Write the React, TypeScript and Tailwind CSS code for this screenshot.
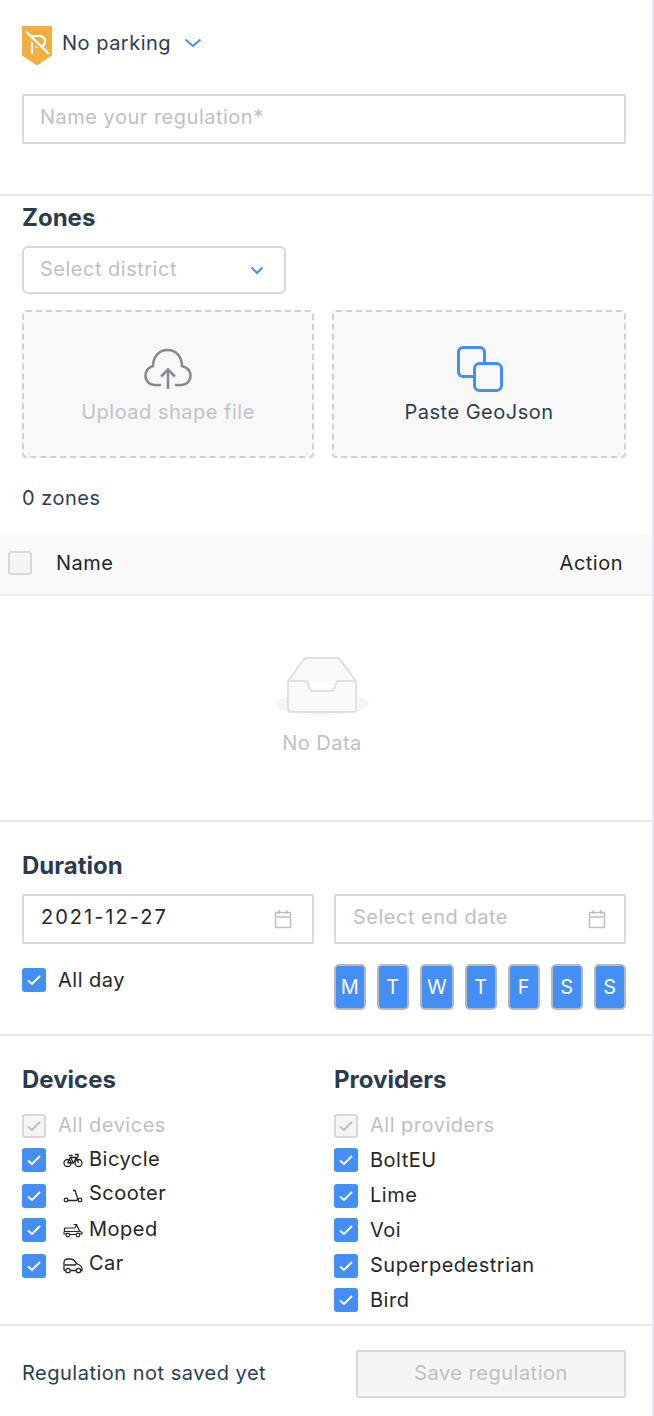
import React from "react";

const Check = ({ disabled = false }: { disabled?: boolean }) => (
  <span
    className={
      disabled
        ? "flex h-6 w-6 shrink-0 items-center justify-center rounded-[3px] border-2 border-[#d9d9d9] bg-[#f5f5f5]"
        : "flex h-6 w-6 shrink-0 items-center justify-center rounded-[3px] bg-[#448ef7]"
    }
  >
    <svg width="16" height="14" viewBox="0 0 16 14" fill="none">
      <path d="M2 7.500 6 11 14 3" stroke={disabled ? "#bfbfbf" : "#fff"} strokeWidth="2" />
    </svg>
  </span>
);

const Bike = () => (
  <svg width="20" height="15" viewBox="0 0 20 15" fill="none" stroke="#262626" strokeWidth="1.300">
    <circle cx="4.500" cy="10" r="3.500" />
    <circle cx="15.500" cy="10" r="3.500" />
    <path d="M4.500 10 7.500 4.500h6l2 5.500M7.500 4.500l3 5.500h-6M10.500 10l3-5.500M6 2.500h3.500M12 1.500h3v2.500L13.500 4.500" />
  </svg>
);
const ScooterIcon = () => (
  <svg width="20" height="15" viewBox="0 0 20 15" fill="none" stroke="#262626" strokeWidth="1.300">
    <circle cx="3" cy="11" r="1.800" />
    <circle cx="17" cy="11" r="1.800" />
    <path d="M5 11.500h9c1-1.500.5-2.500 0-4L12 1.500H10" />
  </svg>
);
const MopedIcon = () => (
  <svg width="20" height="15" viewBox="0 0 20 15" fill="none" stroke="#262626" strokeWidth="1.200">
    <path d="M1.500 5h9.500c.8 0 1.200-.5 1.500-1.200L13.500 1.500h-3M13.500 1.500l3 6.500 2.500 1.500v1.500h-3" />
    <path d="M1.500 5v3.500h13.500l1.500-.5M1 8.500v2.500h2M6.500 11.500h7" />
    <circle cx="4.800" cy="12" r="1.800" />
    <circle cx="15" cy="12" r="1.800" />
  </svg>
);
const CarIcon = () => (
  <svg width="20" height="16" viewBox="0 0 20 16" fill="none" stroke="#262626" strokeWidth="1.300">
    <path d="M2.500 12.500H1.500C1 12.500 1 12 1 11.500V4.500C1 2.500 2.500 1 4.500 1h2.500c3 0 5 1.500 6.500 4.500l3 1.500c1.500.8 2.500 1.800 2.500 3.500v2h-1.500" />
    <path d="M1.500 7h10.500l1.500-1.500M7.500 12.500h5.500" />
    <circle cx="5" cy="12.500" r="2.200" />
    <circle cx="15.500" cy="12.500" r="2.200" />
  </svg>
);

const CalendarIcon = () => (
  <svg width="18" height="20" viewBox="0 0 18 20" fill="none" stroke="#bfbfbf" strokeWidth="1.500">
    <rect x="1.500" y="3.500" width="15" height="15" />
    <path d="M1.500 8h15M5 1v4M13 1v4" />
  </svg>
);

const Row = ({
  label,
  disabled,
  icon,
  rowClass = "",
  labelClass = "",
}: {
  label: string;
  disabled?: boolean;
  icon?: React.ReactNode;
  rowClass?: string;
  labelClass?: string;
}) => (
  <div className={`flex h-6 items-center ${rowClass}`}>
    <Check disabled={disabled} />
    {icon ? (
      <span className="ml-[17px] flex w-[26px] shrink-0 items-center">{icon}</span>
    ) : (
      <span className="w-3 shrink-0" />
    )}
    <span className={`${disabled ? "text-[#bfbfbf]" : "text-[#262626]"} ${labelClass}`}>{label}</span>
  </div>
);

const days = [
  { d: "M", w: "w-8" },
  { d: "T", w: "w-8" },
  { d: "W", w: "w-[34px]" },
  { d: "T", w: "w-8" },
  { d: "F", w: "w-8" },
  { d: "S", w: "w-8" },
  { d: "S", w: "w-8" },
];

export default function App() {
  return (
    <div className="flex h-[1416px] w-[654px] overflow-hidden bg-white font-['Inter',sans-serif] text-[20px] leading-6 tracking-[0.025em]">
      <div className="flex w-[652px] shrink-0 flex-col">
        <div className="h-[196px] shrink-0 border-b-2 border-[#e8e8e8] pt-[26px] pr-[26px] pl-[22px]">
          <div className="flex h-[40px] items-start">
            <svg width="30" height="40" viewBox="0 0 30 40" className="shrink-0">
              <path d="M0 0h30v29.500L16 38.800a2 2 0 0 1-2 0L0 29.500z" fill="#f2ae40" />
              <path d="M10 28V10h7a5.500 5.500 0 0 1 1 11l-5-.5" fill="none" stroke="#fff" strokeWidth="2.200" />
              <path d="M6 9 25 28" stroke="#f2ae40" strokeWidth="4" />
              <path d="M4.500 6 27 28" stroke="#fff" strokeWidth="2.200" />
            </svg>
            <span className="mt-[5px] ml-[10px] text-[#2c3e50]">No parking</span>
            <svg width="18" height="10" viewBox="0 0 18 10" fill="none" className="mt-[12px] ml-[13px]">
              <path d="M1.500 1.500 9 8l7.500-6.500" stroke="#448ef7" strokeWidth="2" />
            </svg>
          </div>
          <div className="mt-[28px] flex h-[50px] items-center rounded-[2px] border-2 border-[#d9d9d9] px-4 pb-1 text-[#bfbfbf]">
            Name your regulation*
          </div>
        </div>

        <div className="pr-[26px] pl-[22px]">
          <h2 className="mt-2 text-[24px] leading-7 font-bold tracking-normal text-[#2a3b50]">Zones</h2>
          <div className="mt-[14px] flex h-12 w-[264px] items-center justify-between rounded-md border-2 border-[#d9d9d9] pr-5 pb-[3px] pl-4 text-[#bfbfbf]">
            Select district
            <svg width="14" height="9" viewBox="0 0 14 9" fill="none" className="mt-1">
              <path d="M1.500 1.500 7 7l5.500-5.500" stroke="#448ef7" strokeWidth="2" />
            </svg>
          </div>
          <div className="mt-4 flex justify-between">
            <div className="flex h-[148px] w-[292px] flex-col items-center rounded-[4px] border-2 border-dashed border-[#d0d0d0] bg-[#f8f8f8] pt-[36px]">
              <svg width="48" height="42" viewBox="0 0 48 42" fill="none" stroke="#85898f" strokeWidth="2.500">
                <path d="M17 37H11C5.500 37 1.500 33 1.500 27.500 1.500 23 4.500 19.500 9 18 9 9 15 2 23.500 2 32 2 38 9 38 18 43 19.500 46.500 23 46.500 27.500 46.500 33 42.500 37 37 37H31" />
                <path d="M24 41V22M17 28.500 24 21.500 31 28.500" />
              </svg>
              <span className="mt-[10px] text-[#bfc3c8]">Upload shape file</span>
            </div>
            <div className="flex h-[148px] w-[294px] flex-col items-center rounded-[4px] border-2 border-dashed border-[#d0d0d0] bg-[#f8f8f8] pt-[34px]">
              <svg width="46" height="46" viewBox="0 0 46 46" fill="none" stroke="#448ef7" strokeWidth="3" className="ml-[2px]">
                <path d="M17 30.500H6a4.500 4.500 0 0 1-4.500-4.500V6A4.500 4.500 0 0 1 6 1.500h17A4.500 4.500 0 0 1 27.500 6v11" />
                <rect x="17.500" y="17.500" width="27" height="27" rx="5" />
              </svg>
              <span className="mt-2 text-[#2c3e50]">Paste GeoJson</span>
            </div>
          </div>
          <p className="mt-[28px] text-[#2c3e50]">0 zones</p>
        </div>

        <div className="mt-[24px] flex h-[62px] shrink-0 items-center justify-between border-b-2 border-[#eeeeee] bg-[#fafafa] pr-[29px] pb-[2px] pl-2">
          <div className="flex items-center">
            <span className="h-6 w-6 rounded-[3px] border-2 border-[#d9d9d9] bg-[#f5f5f5]" />
            <span className="ml-6 text-[#262626]">Name</span>
          </div>
          <span className="text-[#262626]">Action</span>
        </div>

        <div className="flex h-[226px] shrink-0 flex-col items-center border-b-2 border-[#e8e8e8] pt-[60px] pr-[8px]">
          <svg width="96" height="62" viewBox="0 0 96 62">
            <ellipse cx="48" cy="48" rx="47" ry="11" fill="#f5f5f5" />
            <path d="M14 25 31 2h34l17 23v28a3 3 0 0 1-3 3H17a3 3 0 0 1-3-3z" fill="#fafafa" stroke="#d9d9d9" strokeWidth="1.500" />
            <path d="M14 25h17c3 0 3 2 4 6 .5 2 1.500 4 4 4h18c2.500 0 3.500-2 4-4 1-4 1-6 4-6h17" fill="#fff" stroke="#d9d9d9" strokeWidth="1.500" />
          </svg>
          <span className="mt-[13px] text-[#bfbfbf]">No Data</span>
        </div>

        <div className="h-[214px] shrink-0 border-b-2 border-[#e8e8e8] pr-[26px] pl-[22px]">
          <h2 className="mt-[30px] text-[24px] leading-7 font-bold tracking-normal text-[#2a3b50]">Duration</h2>
          <div className="mt-[14px] flex justify-between">
            <div className="flex h-[50px] w-[292px] items-center justify-between rounded-[2px] border-2 border-[#d9d9d9] pr-5 pl-[17px] text-[#262626]">
              <span className="pb-1 tracking-[0.1em]">2021-12-27</span>
              <CalendarIcon />
            </div>
            <div className="flex h-[50px] w-[292px] items-center justify-between rounded-[2px] border-2 border-[#d9d9d9] pr-[18px] pl-[17px] text-[#bfbfbf]">
              <span className="pb-1">Select end date</span>
              <CalendarIcon />
            </div>
          </div>
          <div className="mt-5 flex justify-between">
            <div className="mt-1 flex h-6 items-center">
              <Check />
              <span className="ml-3 text-[#262626]">All day</span>
            </div>
            <div className="flex w-[292px] justify-between">
              {days.map((x, i) => (
                <span
                  key={i}
                  className={`flex h-[46px] ${x.w} items-center justify-center rounded-[5px] border-2 border-[#b5b8bd] bg-[#448ef7] text-white`}
                >
                  {x.d}
                </span>
              ))}
            </div>
          </div>
        </div>

        <div className="flex h-[290px] shrink-0 justify-between border-b-2 border-[#e8e8e8] pr-[26px] pl-[22px]">
          <div className="w-[292px]">
            <h2 className="mt-[30px] text-[24px] leading-7 font-bold tracking-normal text-[#2a3b50]">Devices</h2>
            <div className="mt-[20px] flex flex-col">
              <Row label="All devices" disabled labelClass="-mt-[2px]" />
              <Row label="Bicycle" icon={<Bike />} rowClass="mt-[10px]" labelClass="-mt-[2px]" />
              <Row label="Scooter" icon={<ScooterIcon />} rowClass="mt-3" labelClass="-mt-[6px]" />
              <Row label="Moped" icon={<MopedIcon />} rowClass="mt-[10px]" labelClass="-mt-[2px]" />
              <Row label="Car" icon={<CarIcon />} rowClass="mt-3" labelClass="-mt-[6px]" />
            </div>
          </div>
          <div className="w-[292px]">
            <h2 className="mt-[30px] text-[24px] leading-7 font-bold tracking-normal text-[#2a3b50]">Providers</h2>
            <div className="mt-[20px] flex flex-col">
              <Row label="All providers" disabled labelClass="-mt-[2px]" />
              <Row label="BoltEU" rowClass="mt-[10px]" />
              <Row label="Lime" rowClass="mt-3" labelClass="-mt-[2px]" />
              <Row label="Voi" rowClass="mt-[10px]" />
              <Row label="Superpedestrian" rowClass="mt-3" labelClass="-mt-[2px]" />
              <Row label="Bird" rowClass="mt-[10px]" />
            </div>
          </div>
        </div>

        <div className="flex items-center justify-between pt-[24px] pr-[26px] pl-[22px]">
          <span className="pb-[2px] text-[#2c3e50]">Regulation not saved yet</span>
          <div className="flex h-12 w-[270px] items-center justify-center rounded-[2px] border-2 border-[#d9d9d9] bg-[#f5f5f5] pb-[2px] text-[#bfbfbf]">
            Save regulation
          </div>
        </div>
      </div>
      <div className="h-full w-[2px] shrink-0 bg-[#dfeaf5]" />
    </div>
  );
}
